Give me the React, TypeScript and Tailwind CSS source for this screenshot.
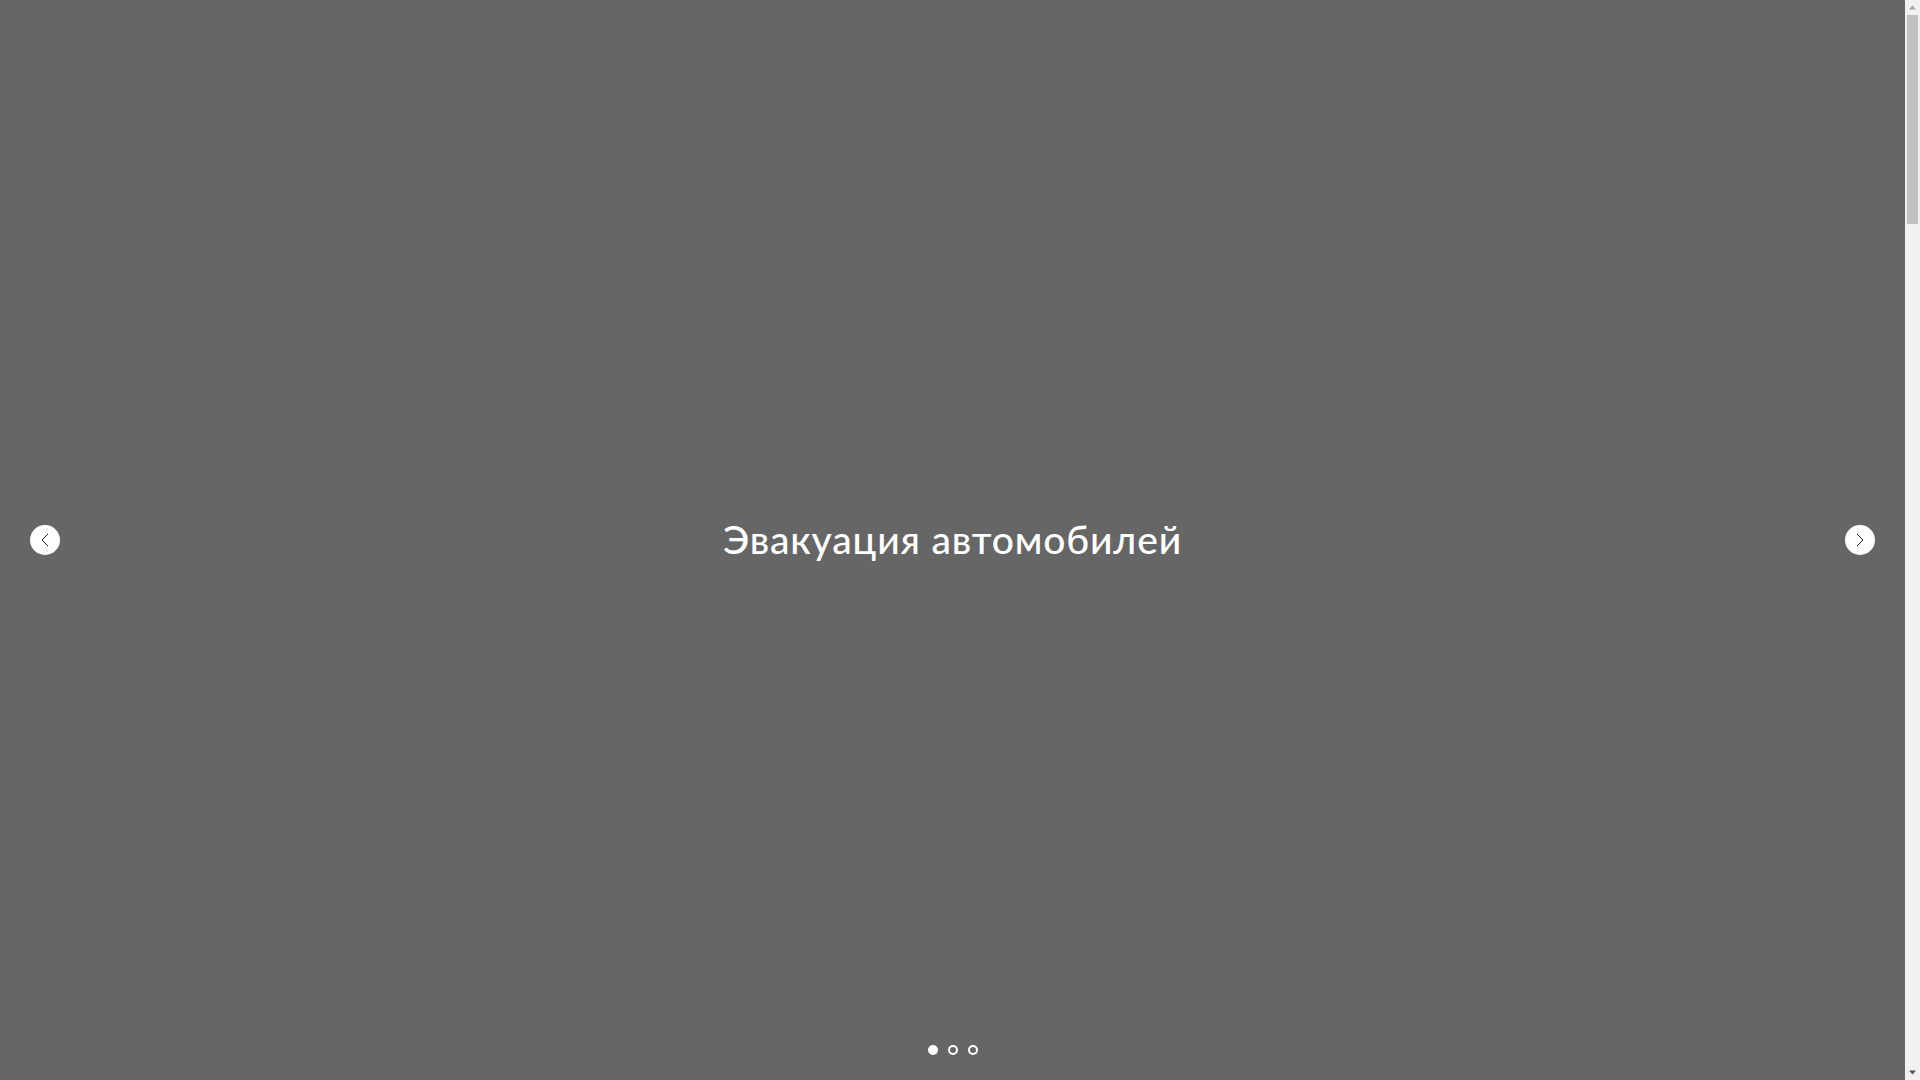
import React, { useState } from 'react';

const slides = ['Эвакуация автомобилей', 'Эвакуация автомобилей', 'Эвакуация автомобилей'];

function Chevron({ dir }: { dir: 'left' | 'right' }) {
  return (
    <svg width="8" height="14" viewBox="0 0 8 14" fill="none">
      {dir === 'left' ? (
        <path d="M7 1L1 7l6 6" stroke="#222" strokeWidth="1" />
      ) : (
        <path d="M1 1l6 6-6 6" stroke="#222" strokeWidth="1" />
      )}
    </svg>
  );
}

// the browser's scrollbar, as it shows in the picture
function Scrollbar() {
  return (
    <div className="fixed top-0 right-0 h-screen w-[15px] bg-[#f1f1f1] flex flex-col items-center">
      <svg width="15" height="15" viewBox="0 0 15 15">
        <path d="M4 9.5h7L7.5 5.5z" fill="#a3a3a3" />
      </svg>
      <div className="w-[11px] h-[209px] bg-[#c1c1c1]" />
      <div className="flex-1" />
      <svg width="15" height="15" viewBox="0 0 15 15">
        <path d="M4 5.5h7L7.5 9.5z" fill="#505050" />
      </svg>
    </div>
  );
}

export default function App() {
  const [active, setActive] = useState(0);

  const prev = () => setActive((active - 1 + slides.length) % slides.length);
  const next = () => setActive((active + 1) % slides.length);

  return (
    <div className="bg-white pr-[15px]" style={{ fontFamily: 'Lato, "Noto Sans", sans-serif' }}>
      {/* Slider */}
      <section className="relative h-screen bg-[#666666] overflow-hidden flex items-center justify-center">
        <h1 className="text-white text-[39px] font-medium tracking-[0.85px] leading-none -mt-[2px]">
          {slides[active]}
        </h1>

        <button
          onClick={prev}
          className="absolute left-[30px] top-1/2 -translate-y-1/2 w-[30px] h-[30px] rounded-full bg-white flex items-center justify-center"
        >
          <Chevron dir="left" />
        </button>
        <button
          onClick={next}
          className="absolute right-[30px] top-1/2 -translate-y-1/2 w-[30px] h-[30px] rounded-full bg-white flex items-center justify-center"
        >
          <Chevron dir="right" />
        </button>

        <div className="absolute bottom-[25px] left-0 right-0 flex justify-center gap-[10px]">
          {slides.map((_, i) => (
            <button
              key={i}
              onClick={() => setActive(i)}
              className={
                i === active
                  ? 'w-[10px] h-[10px] rounded-full bg-white'
                  : 'w-[10px] h-[10px] rounded-full border-2 border-white'
              }
            />
          ))}
        </div>
      </section>

      {/* Rest of page */}
      <div className="h-[4350px] bg-white" />

      <Scrollbar />
    </div>
  );
}
